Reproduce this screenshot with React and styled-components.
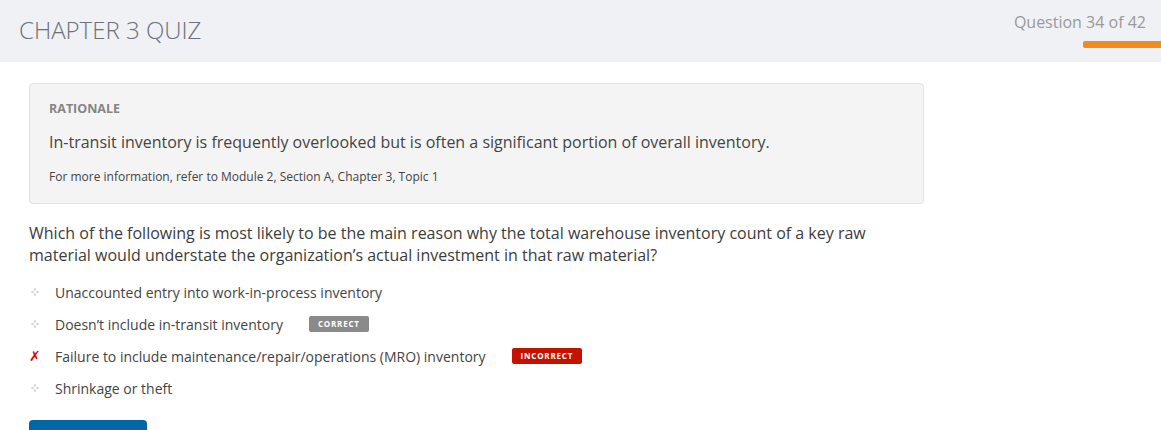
import React from "react";
import styled, { createGlobalStyle } from "styled-components";

const Global = createGlobalStyle`
  html, body { margin: 0; padding: 0; background: #fff; }
  body { font-family: "Open Sans", "Liberation Sans", Arial, sans-serif; color: #444; }
  * { box-sizing: border-box; }
`;

const Page = styled.div`
  width: 1161px;
  height: 430px;
  overflow: hidden;
`;

const Header = styled.header`
  height: 62px;
  background: #eff1f5;
  display: flex;
  justify-content: space-between;
  align-items: flex-start;
`;

const Title = styled.h1`
  margin: 0;
  padding: 13px 0 0 19px;
  font-size: 24px;
  line-height: 34px;
  font-weight: 300;
  color: #6b7079;
`;

const Progress = styled.div`
  display: flex;
  flex-direction: column;
  align-items: flex-end;
  padding-top: 11px;
`;

const ProgressLabel = styled.div`
  font-size: 16px;
  color: #9a9a9a;
  padding-right: 15px;
  line-height: 22px;
`;

const ProgressBar = styled.div`
  margin-top: 8px;
  width: 78px;
  height: 7px;
  background: #f28b1e;
  border-radius: 2px 0 0 2px;
`;

const Main = styled.main`
  padding: 21px 0 0 29px;
  width: 924px;
`;

const Rationale = styled.section`
  background: #f4f4f4;
  border: 1px solid #e3e3e3;
  border-radius: 4px;
  padding: 16px 19px 18px;
`;

const RationaleLabel = styled.div`
  font-size: 12.5px;
  font-weight: 700;
  color: #858585;
  line-height: 18px;
`;

const RationaleText = styled.p`
  margin: 13px 0 0;
  font-size: 16px;
  line-height: 22px;
  color: #444;
`;

const RationaleRef = styled.p`
  margin: 16px 0 0;
  font-size: 12px;
  line-height: 16px;
  color: #444;
`;

const Question = styled.p`
  margin: 18px 0 0;
  font-size: 16px;
  line-height: 22px;
  color: #3c3c3c;
`;

const Options = styled.ul`
  list-style: none;
  margin: 10px 0 0;
  padding: 0;
`;

const Option = styled.li`
  display: flex;
  align-items: center;
  height: 32px;
  font-size: 14px;
  color: #444;
`;

const Marker = styled.span`
  width: 26px;
  flex: none;
  display: flex;
  align-items: center;
  padding-left: ${(p) => (p.$wrong ? "0" : "2px")};
`;

const Cross = styled.span`
  color: #e8000b;
  font-size: 14px;
  font-weight: 700;
  font-family: "DejaVu Sans", sans-serif;
  font-style: italic;
`;

const Badge = styled.span`
  margin-left: 26px;
  background: ${(p) => (p.$wrong ? "#c41200" : "#8a8a8a")};
  color: #fff;
  font-size: 8px;
  font-weight: 700;
  letter-spacing: 0.8px;
  border-radius: 2px;
  padding: 0 9px;
  height: 16px;
  line-height: 16px;
  display: inline-block;
`;

const SubmitButton = styled.button`
  margin-top: 16px;
  width: 118px;
  height: 40px;
  background: #0067a6;
  border: none;
  border-radius: 4px;
  display: block;
`;

const Diamond = () => (
  <svg width="8" height="8" viewBox="0 0 8 8">
    <rect x="3" y="0.5" width="2" height="2" fill="#cfcfcf" />
    <rect x="0.5" y="3" width="2" height="2" fill="#cfcfcf" />
    <rect x="5.5" y="3" width="2" height="2" fill="#cfcfcf" />
    <rect x="3" y="5.5" width="2" height="2" fill="#cfcfcf" />
  </svg>
);

const options = [
  { text: "Unaccounted entry into work-in-process inventory" },
  { text: "Doesn\u2019t include in-transit inventory", badge: "CORRECT" },
  { text: "Failure to include maintenance/repair/operations (MRO) inventory", badge: "INCORRECT", wrong: true },
  { text: "Shrinkage or theft" },
];

export default function App() {
  return (
    <Page>
      <Global />
      <Header>
        <Title>CHAPTER 3 QUIZ</Title>
        <Progress>
          <ProgressLabel>Question 34 of 42</ProgressLabel>
          <ProgressBar />
        </Progress>
      </Header>
      <Main>
        <Rationale>
          <RationaleLabel>RATIONALE</RationaleLabel>
          <RationaleText>
            In-transit inventory is frequently overlooked but is often a significant portion of overall inventory.
          </RationaleText>
          <RationaleRef>For more information, refer to Module 2, Section A, Chapter 3, Topic 1</RationaleRef>
        </Rationale>
        <Question>
          Which of the following is most likely to be the main reason why the total warehouse inventory count of a key raw
          material would understate the organization’s actual investment in that raw material?
        </Question>
        <Options>
          {options.map((o) => (
            <Option key={o.text}>
              <Marker $wrong={o.wrong}>{o.wrong ? <Cross>✗</Cross> : <Diamond />}</Marker>
              <span>{o.text}</span>
              {o.badge && <Badge $wrong={o.wrong}>{o.badge}</Badge>}
            </Option>
          ))}
        </Options>
        <SubmitButton aria-label="Submit" />
      </Main>
    </Page>
  );
}
